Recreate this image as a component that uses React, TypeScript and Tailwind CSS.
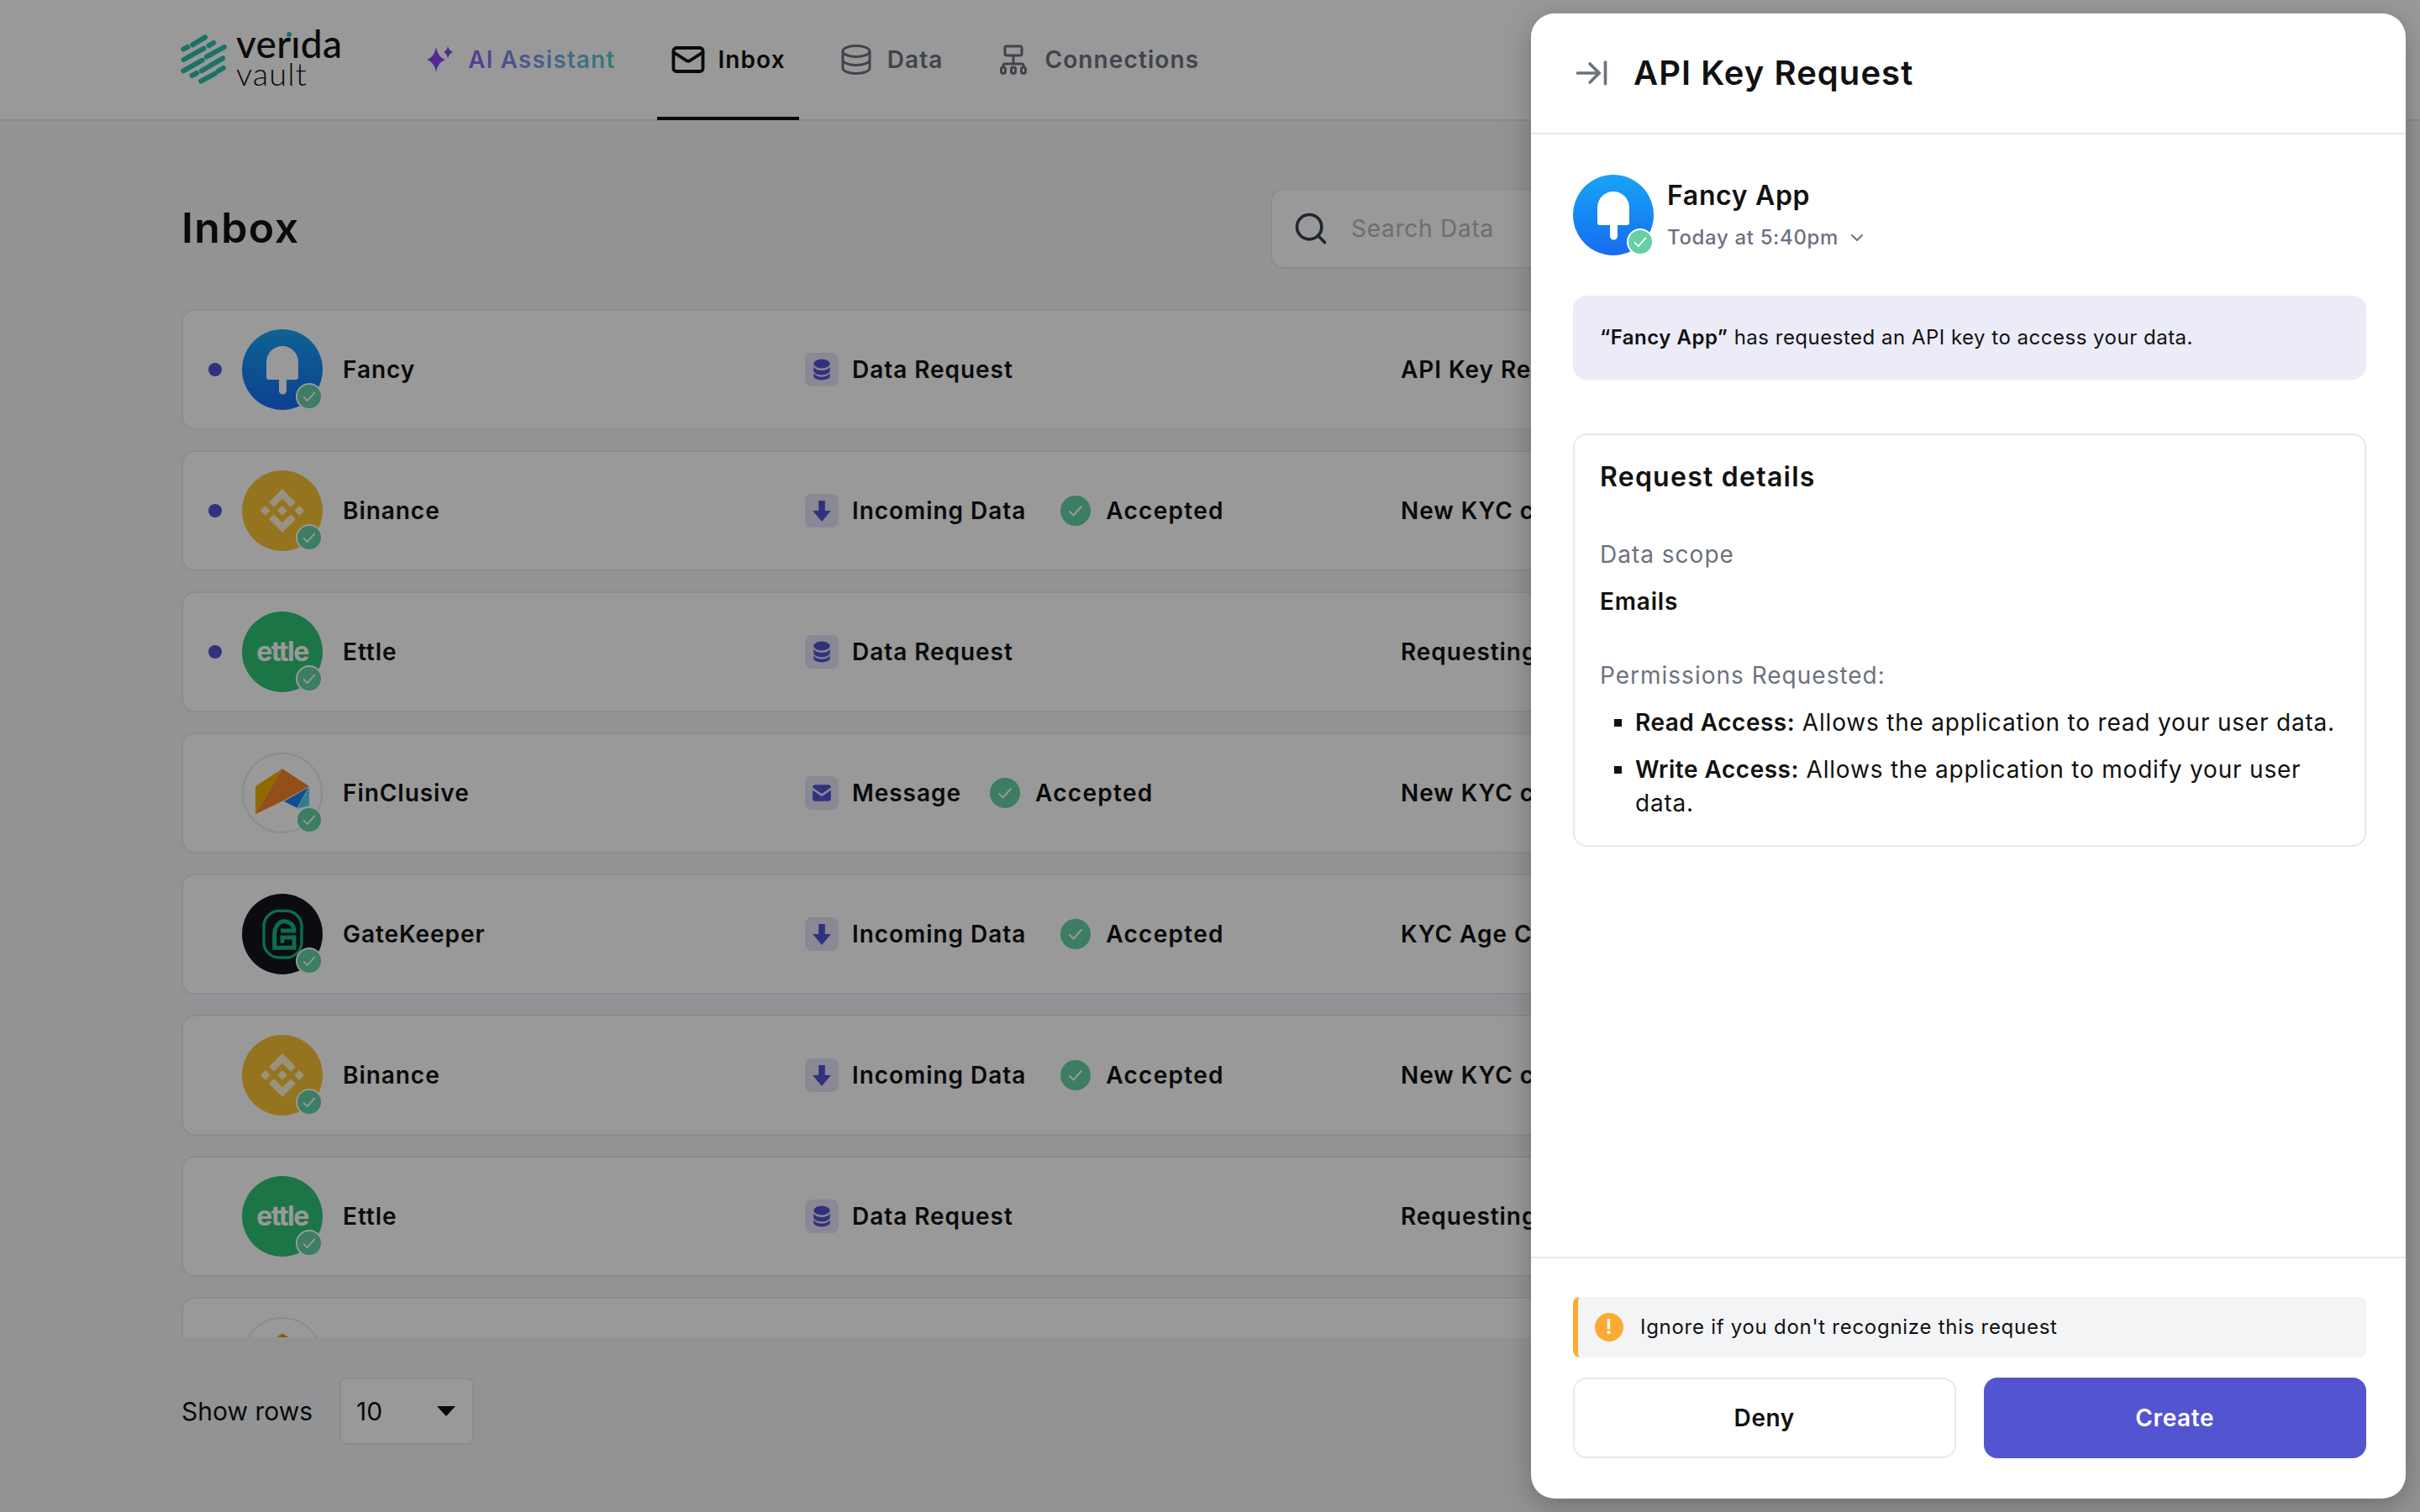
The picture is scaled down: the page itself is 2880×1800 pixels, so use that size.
import { ArrowRightToLine, ChevronDown, Mail, Search } from 'lucide-react'
import { SiBinance } from 'react-icons/si'

type Logo = 'fancy' | 'binance' | 'ettle' | 'finclusive' | 'gatekeeper'
type Kind = 'data' | 'incoming' | 'message'

const rows: { logo: Logo; name: string; kind: Kind; unread?: boolean; accepted?: boolean; title: string }[] = [
  { logo: 'fancy', name: 'Fancy', kind: 'data', unread: true, title: 'API Key Request' },
  { logo: 'binance', name: 'Binance', kind: 'incoming', unread: true, accepted: true, title: 'New KYC credential' },
  { logo: 'ettle', name: 'Ettle', kind: 'data', unread: true, title: 'Requesting your data' },
  { logo: 'finclusive', name: 'FinClusive', kind: 'message', accepted: true, title: 'New KYC credential' },
  { logo: 'gatekeeper', name: 'GateKeeper', kind: 'incoming', accepted: true, title: 'KYC Age Credential' },
  { logo: 'binance', name: 'Binance', kind: 'incoming', accepted: true, title: 'New KYC credential' },
  { logo: 'ettle', name: 'Ettle', kind: 'data', title: 'Requesting your data' },
  { logo: 'finclusive', name: 'FinClusive', kind: 'message', accepted: true, title: 'New KYC credential' },
]

const kindLabel: Record<Kind, string> = { data: 'Data Request', incoming: 'Incoming Data', message: 'Message' }

function Check({ className }: { className: string }) {
  return (
    <svg viewBox="0 0 24 24" fill="none" stroke="currentColor" strokeWidth="2" strokeLinecap="round" strokeLinejoin="round" className={className}>
      <path d="M5 13l4.5 4.5L19 7" />
    </svg>
  )
}

function VeridaLogo() {
  return (
    <div className="flex items-center gap-[10px]">
      <svg viewBox="45 45 170 180" className="h-[60px] w-[57px]" fill="none" stroke="#2fbfac" strokeWidth="18" strokeLinecap="round">
        <path d="M90 82L135 55M57 98L72 90M148 85L165 75M58 135L130 95M140 125L203 90M57 175L125 137M122 175L198 130M88 192L105 183M182 175L200 165M120 212L170 185" />
      </svg>
      <div className="-mt-[6px] flex flex-col text-[#111111] font-[Lato,sans-serif]">
        <span className="relative h-[38px] text-[46px] leading-[38px] font-medium tracking-[0.3px]">
          verıda
          <span className="absolute left-[60px] top-[5px] h-[6px] w-[6px] rounded-full bg-[#2fbfac]" />
        </span>
        <span className="h-[32px] text-[38px] leading-[32px] font-light">vault</span>
      </div>
    </div>
  )
}

function Popsicle() {
  return (
    <svg viewBox="0 0 96 96" className="h-full w-full" fill="#ffffff">
      <path d="M29 39a19 19 0 0 1 38 0V57a3 3 0 0 1-3 3H53V73a4.5 4.5 0 0 1-9 0V60H32a3 3 0 0 1-3-3Z" />
    </svg>
  )
}

function AppLogo({ logo }: { logo: Logo }) {
  let inner = null
  if (logo === 'fancy') {
    inner = (
      <div className="h-full w-full rounded-full bg-linear-to-b from-[#1aa3f5] to-[#1a6bf0]">
        <Popsicle />
      </div>
    )
  } else if (logo === 'binance') {
    inner = (
      <div className="flex h-full w-full items-center justify-center rounded-full bg-[#f8c135] text-[#fff3d2]">
        <SiBinance size={52} />
      </div>
    )
  } else if (logo === 'ettle') {
    inner = (
      <div className="flex h-full w-full items-center justify-center rounded-full bg-[#2fc375] text-[32px] font-bold tracking-[-1.5px] text-white">
        ettle
      </div>
    )
  } else if (logo === 'finclusive') {
    inner = (
      <div className="h-full w-full rounded-full border-2 border-[#e5e9f0] bg-white">
        <svg viewBox="0 0 288 288" className="-m-[2px] h-[96px] w-[96px]">
          <polygon points="48,120 144,58 48,220" fill="#f0b000" />
          <polygon points="144,58 240,120 150,170 48,220" fill="#f5822c" />
          <polygon points="150,174 238,124 196,197" fill="#1a80f0" />
          <polygon points="240,124 240,190 196,200" fill="#55cff0" />
        </svg>
      </div>
    )
  } else {
    inner = (
      <div className="h-full w-full rounded-full bg-[#11151f]">
        <svg viewBox="54 42 288 288" className="h-full w-full" fill="none" stroke="#15b67f">
          <rect x="132" y="103" width="135" height="167" rx="55" strokeWidth="10" />
          <path strokeWidth="15" d="M170 198C168 160 186 140 203 140C224 140 240 154 240 174H192M170 198V235H240V198H198V218" />
        </svg>
      </div>
    )
  }
  return (
    <div className="relative h-[96px] w-[96px] shrink-0">
      {inner}
      <div className="absolute bottom-0 right-0 flex h-[32px] w-[32px] items-center justify-center rounded-full border-2 border-white bg-[#65d0a5] text-white">
        <Check className="h-[22px] w-[22px]" />
      </div>
    </div>
  )
}

function KindIcon({ kind }: { kind: Kind }) {
  return (
    <div className="flex h-[40px] w-[40px] shrink-0 items-center justify-center rounded-[8px] bg-[#e4e3f7]">
      {kind === 'data' && (
        <svg viewBox="0 0 24 24" className="h-[26px] w-[26px]" fill="#5354d0">
          <ellipse cx="12" cy="5.5" rx="9" ry="5" />
          <path d="M3 9c1.5 2.6 5 4 9 4s7.5-1.4 9-4v4c0 2.6-4 5-9 5s-9-2.4-9-5Z" />
          <path d="M3 16c1.5 2.6 5 4 9 4s7.5-1.4 9-4v3c0 2.6-4 4.5-9 4.5S3 21.600 3 19Z" />
        </svg>
      )}
      {kind === 'incoming' && (
        <svg viewBox="0 0 24 24" className="h-[26px] w-[26px]" fill="#5354d0">
          <path d="M8.500 1h7v11H22L12 24 2 12h6.500Z" />
        </svg>
      )}
      {kind === 'message' && (
        <svg viewBox="0 0 24 24" className="h-[26px] w-[26px]" fill="#5354d0">
          <path d="M2 6a3 3 0 0 1 3-3h14a3 3 0 0 1 3 3L12 13 2 6Z" />
          <path d="M2 9l10 7 10-7v9a3 3 0 0 1-3 3H5a3 3 0 0 1-3-3Z" />
        </svg>
      )}
    </div>
  )
}

function Row({ row }: { row: (typeof rows)[number] }) {
  return (
    <div className="grid h-[144px] shrink-0 grid-cols-[740px_709px_1fr] items-center rounded-[16px] border-2 border-[#e5e9f0] bg-white text-[28px] font-semibold tracking-[0.95px] text-[#111111]">
      <div className="flex items-center pl-[30px]">
        <div className={row.unread ? 'h-[16px] w-[16px] rounded-full bg-[#5354d0]' : 'h-[16px] w-[16px]'} />
        <div className="ml-[24px]">
          <AppLogo logo={row.logo} />
        </div>
        <span className="ml-[24px]">{row.name}</span>
      </div>
      <div className="flex items-center">
        <KindIcon kind={row.kind} />
        <span className="ml-[16px]">{kindLabel[row.kind]}</span>
        {row.accepted && (
          <div className={row.kind === 'message' ? 'ml-[34px] flex items-center gap-[18px]' : 'ml-[41px] flex items-center gap-[18px]'}>
            <div className="flex h-[36px] w-[36px] items-center justify-center rounded-full bg-[#65d0a5] text-white">
              <Check className="h-[24px] w-[24px]" />
            </div>
            <span className="tracking-[1.3px]">Accepted</span>
          </div>
        )}
      </div>
      <div className="whitespace-nowrap">{row.title}</div>
    </div>
  )
}

function NavBar() {
  return (
    <header className="flex h-[144px] items-center border-b-2 border-[#e5e9f0] bg-white pl-[214px] text-[28px] font-semibold tracking-[1.1px] text-[#6b7280]">
      <VeridaLogo />
      <nav className="ml-[85px] flex h-[144px] items-center gap-[34px]">
        <a className="flex h-[144px] items-center gap-[17px] border-b-4 border-transparent px-[16px] pt-[4px]">
          <svg viewBox="0 0 32 32" className="h-[32px] w-[32px]" fill="#8b48f0">
            <path d="M11 1Q13 13 22 16Q13 19 11 31Q9 19 0 16Q9 13 11 1Z" />
            <path d="M25 0Q26 5 31 7Q26 9 25 15Q24 9 20 7Q24 5 25 0Z" />
          </svg>
          <span className="bg-linear-to-r from-[#9060fa] to-[#50cfc8] bg-clip-text text-transparent">AI Assistant</span>
        </a>
        <a className="flex h-[144px] items-center gap-[14px] border-b-4 border-[#111111] px-[16px] pt-[4px] text-[#111111]">
          <Mail size={42} strokeWidth={2.2} />
          <span>Inbox</span>
        </a>
        <a className="flex h-[144px] items-center gap-[19px] border-b-4 border-transparent px-[16px] pt-[4px]">
          <svg viewBox="0 0 36 36" className="h-[36px] w-[36px]" fill="none" stroke="currentColor" strokeWidth="3">
            <ellipse cx="18" cy="8" rx="16" ry="6.500" />
            <path d="M2 8v20c0 3.600 7 6.500 16 6.500s16-2.900 16-6.500V8M2 18c0 3.600 7 6.500 16 6.500s16-2.900 16-6.500" />
          </svg>
          <span>Data</span>
        </a>
        <a className="flex h-[144px] items-center gap-[19px] border-b-4 border-transparent px-[16px] pt-[4px]">
          <svg viewBox="0 0 36 36" className="h-[36px] w-[36px]" fill="none" stroke="currentColor" strokeWidth="3">
            <rect x="8" y="2" width="20" height="11" rx="2" />
            <path d="M18 13v10M6 27v-2a2 2 0 0 1 2-2h20a2 2 0 0 1 2 2v2" />
            <rect x="3.500" y="27" width="5" height="7.500" rx="2.500" />
            <rect x="15.500" y="27" width="5" height="7.500" rx="2.500" />
            <rect x="27.500" y="27" width="5" height="7.500" rx="2.500" />
          </svg>
          <span>Connections</span>
        </a>
      </nav>
    </header>
  )
}

function DetailPanel() {
  return (
    <aside className="absolute bottom-[16px] right-[17px] top-[16px] flex w-[1041px] flex-col rounded-[28px] bg-white text-[#111111] shadow-[0_8px_32px_rgba(0,0,0,0.25)]">
      <div className="flex h-[144px] shrink-0 items-center gap-[28px] border-b-2 border-[#e5e9f0] pl-[50px]">
        <ArrowRightToLine size={44} strokeWidth={2} className="text-[#6b7280]" />
        <h2 className="text-[40px] font-semibold tracking-[1.05px]">API Key Request</h2>
      </div>

      <div className="flex flex-1 flex-col pl-[50px] pr-[47px] pt-[48px]">
        <div className="flex items-center gap-[16px]">
          <AppLogo logo="fancy" />
          <div className="flex flex-col gap-[14px]">
            <span className="text-[32px] leading-[40px] font-semibold tracking-[0.65px]">Fancy App</span>
            <div className="flex items-center gap-[10px] text-[24px] leading-[32px] font-medium tracking-[0.65px] text-[#6b7280]">
              Today at 5:40pm
              <ChevronDown size={24} />
            </div>
          </div>
        </div>

        <div className="mt-[48px] flex h-[100px] items-center rounded-[16px] bg-[#ecebf8] px-[32px] text-[24px] tracking-[0.5px]">
          <p>
            <span className="font-semibold">“Fancy App”</span> has requested an API key to access your data.
          </p>
        </div>

        <div className="mt-[64px] rounded-[16px] border-2 border-[#e5e9f0] p-[30px] text-[28px] leading-[40px] tracking-[0.8px]">
          <h3 className="text-[32px] font-semibold tracking-[1.25px]">Request details</h3>
          <p className="mt-[52px] tracking-[1px] text-[#6b7280]">Data scope</p>
          <p className="mt-[16px] font-semibold">Emails</p>
          <p className="mt-[48px] tracking-[1px] text-[#6b7280]">Permissions Requested:</p>
          <ul className="mt-[16px] flex list-[square] flex-col gap-[16px] pl-[42px]">
            <li>
              <span className="font-semibold tracking-[0.5px]">Read Access:</span> Allows the application to read your user data.
            </li>
            <li>
              <span className="font-semibold tracking-[0.5px]">Write Access:</span> Allows the application to modify your user data.
            </li>
          </ul>
        </div>
      </div>

      <div className="shrink-0 border-t-2 border-[#e5e9f0] pb-[48px] pl-[50px] pr-[47px] pt-[46px]">
        <div className="flex h-[72px] items-center gap-[20px] rounded-[8px] border-l-[6px] border-[#fbab34] bg-[#f3f4f6] pl-[20px] text-[24px] tracking-[0.72px]">
          <div className="flex h-[34px] w-[34px] items-center justify-center rounded-full bg-[#fbab34] text-[24px] leading-none font-semibold text-white">!</div>
          <span>Ignore if you don't recognize this request</span>
        </div>
        <div className="mt-[24px] grid grid-cols-2 gap-[33px] text-[28px] font-semibold tracking-[0.6px]">
          <button className="h-[96px] rounded-[16px] border-2 border-[#e5e9f0] bg-white text-[#111111]">Deny</button>
          <button className="h-[96px] rounded-[16px] bg-[#5354d0] text-white">Create</button>
        </div>
      </div>
    </aside>
  )
}

export default function App() {
  return (
    <div className="relative h-[1800px] w-[2880px] overflow-hidden bg-[#f3f5f8] font-[Inter,sans-serif]">
      <NavBar />

      <main className="px-[216px] pt-[80px] text-[#111111]">
        <div className="flex h-[96px] items-center justify-between">
          <h1 className="pb-[2px] text-[50px] font-semibold tracking-[1.4px]">Inbox</h1>
          <div className="flex h-[96px] w-[1152px] items-center gap-[26px] rounded-[16px] border-2 border-[#e5e9f0] bg-white pl-[24px] text-[28px] tracking-[0.75px] text-[#b4b8c0]">
            <Search size={44} strokeWidth={2} className="text-[#374151]" />
            Search Data
          </div>
        </div>

        <div className="mt-[48px] flex h-[1224px] flex-col gap-[24px] overflow-hidden">
          {rows.map((row, i) => (
            <Row key={i} row={row} />
          ))}
        </div>

        <div className="mt-[48px] flex items-center gap-[32px] text-[30px]">
          <span>Show rows</span>
          <div className="flex h-[80px] w-[160px] items-center justify-between rounded-[8px] border-2 border-[#e5e9f0] bg-white pl-[18px] pr-[20px]">
            10
            <svg viewBox="0 0 22 12" className="h-[12px] w-[22px]" fill="#111111">
              <path d="M0 0h22L11 12Z" />
            </svg>
          </div>
        </div>
      </main>

      {/* dimmed backdrop behind the drawer */}
      <div className="absolute inset-0 bg-black/40" />

      <DetailPanel />
    </div>
  )
}
